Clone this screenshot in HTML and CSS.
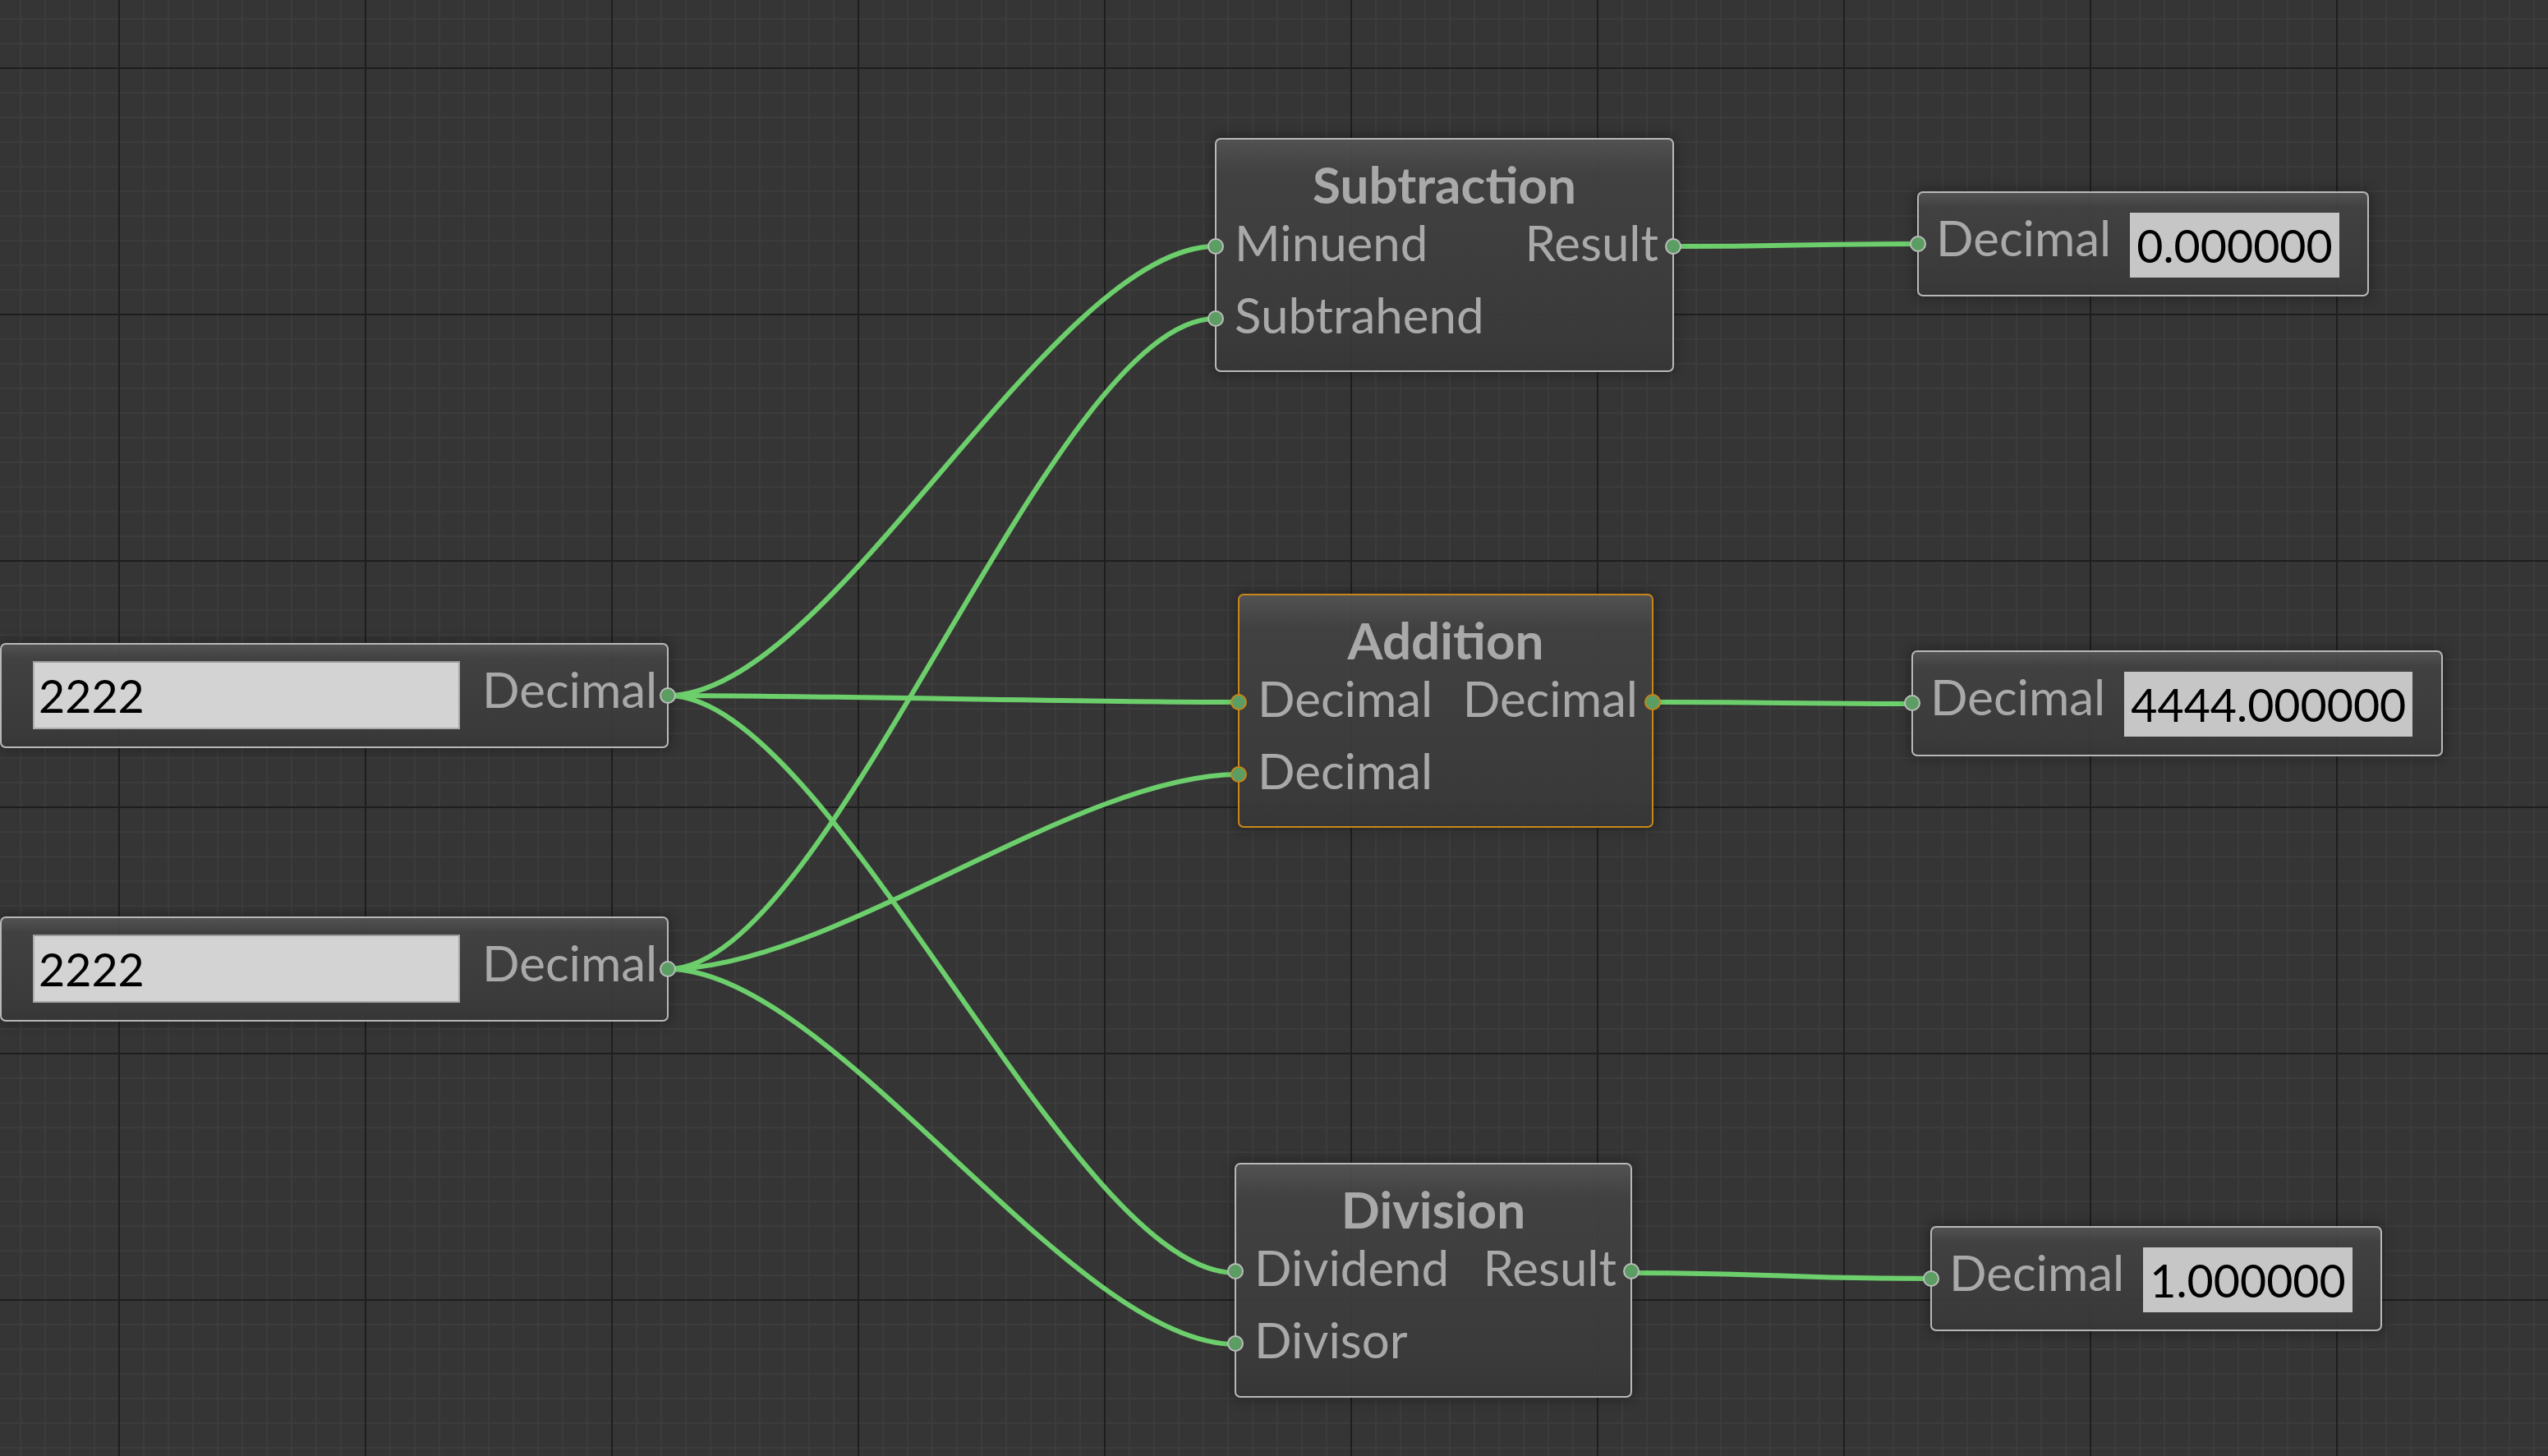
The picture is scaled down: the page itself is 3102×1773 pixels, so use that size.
FILE: index.html
```html
<!DOCTYPE html>
<html lang="en">
<head>
<meta charset="utf-8">
<title>Node Editor</title>
<link rel="stylesheet" href="styles.css">
</head>
<body>
<div class="canvas">
  <svg class="wires" width="3102" height="1773" viewBox="0 0 3102 1773" xmlns="http://www.w3.org/2000/svg">
    <g fill="none" stroke="#6ccf6c" stroke-width="6" stroke-linecap="round">
      <path d="M813,847 C1013,847 1280,300 1480,300"/>
      <path d="M813,1180 C1013,1180 1280,388 1480,388"/>
      <path d="M813,847 C1013,847 1308,855 1508,855"/>
      <path d="M813,1180 C1013,1180 1308,943 1508,943"/>
      <path d="M813,847 C1013,847 1304,1550 1504,1550"/>
      <path d="M813,1180 C1013,1180 1304,1637 1504,1637"/>
      <path d="M2037,300 C2186,300 2186,297 2335,297"/>
      <path d="M2012,855 C2170,855 2170,857 2328,857"/>
      <path d="M1986,1550 C2168,1550 2169,1557 2351,1557"/>
    </g>
  </svg>

  <div class="node value-node input-node n-in1">
    <div class="field">2222</div>
    <span class="lbl">Decimal</span>
    <span class="port port-right"></span>
  </div>

  <div class="node value-node input-node n-in2">
    <div class="field">2222</div>
    <span class="lbl">Decimal</span>
    <span class="port port-right"></span>
  </div>

  <div class="node op-node n-sub">
    <div class="title">Subtraction</div>
    <div class="row">
      <span class="port port-left"></span>
      <span class="lbl">Minuend</span>
      <span class="lbl">Result</span>
      <span class="port port-right"></span>
    </div>
    <div class="row">
      <span class="port port-left"></span>
      <span class="lbl">Subtrahend</span>
    </div>
  </div>

  <div class="node op-node selected n-add">
    <div class="title">Addition</div>
    <div class="row">
      <span class="port port-left"></span>
      <span class="lbl">Decimal</span>
      <span class="lbl">Decimal</span>
      <span class="port port-right"></span>
    </div>
    <div class="row">
      <span class="port port-left"></span>
      <span class="lbl">Decimal</span>
    </div>
  </div>

  <div class="node op-node n-div">
    <div class="title">Division</div>
    <div class="row">
      <span class="port port-left"></span>
      <span class="lbl">Dividend</span>
      <span class="lbl">Result</span>
      <span class="port port-right"></span>
    </div>
    <div class="row">
      <span class="port port-left"></span>
      <span class="lbl">Divisor</span>
    </div>
  </div>

  <div class="node value-node output-node n-out1">
    <span class="port port-left"></span>
    <span class="lbl">Decimal</span>
    <div class="readout">0.000000</div>
  </div>

  <div class="node value-node output-node n-out2">
    <span class="port port-left"></span>
    <span class="lbl">Decimal</span>
    <div class="readout">4444.000000</div>
  </div>

  <div class="node value-node output-node n-out3">
    <span class="port port-left"></span>
    <span class="lbl">Decimal</span>
    <div class="readout">1.000000</div>
  </div>
</div>
</body>
</html>
```
FILE: styles.css
```css
html, body {
  margin: 0;
  padding: 0;
  background: #353535;
}

.canvas {
  position: relative;
  width: 3102px;
  height: 1773px;
  overflow: hidden;
  font-family: Lato, "Open Sans", sans-serif;
  background-color: #353535;
  background-image:
    linear-gradient(to right, #1e1e1e 2px, transparent 2px),
    linear-gradient(to bottom, #1e1e1e 2px, transparent 2px),
    linear-gradient(to right, #3c3c3c 2px, transparent 2px),
    linear-gradient(to bottom, #3c3c3c 2px, transparent 2px);
  background-size: 300px 300px, 300px 300px, 30px 30px, 30px 30px;
  background-position: 144px 0, 0 82px, 24px 0, 0 22px;
}

.wires {
  position: absolute;
  left: 0;
  top: 0;
}

/* ---------- nodes ---------- */
.node {
  position: absolute;
  box-sizing: border-box;
  border: 2px solid #b8b8b8;
  border-radius: 7px;
  background: linear-gradient(to bottom,
    rgba(84, 84, 84, 0.92) 0,
    rgba(66, 66, 66, 0.92) 14%,
    rgba(58, 58, 58, 0.92) 88%,
    rgba(54, 54, 54, 0.92) 100%);
  box-shadow: 0 0 14px 3px rgba(0, 0, 0, 0.28);
  color: #a9a9a9;
  font-size: 60px;
}

.node.selected {
  border-color: #c9861a;
}

.lbl {
  white-space: nowrap;
}

/* ports */
.port {
  position: absolute;
  box-sizing: border-box;
  width: 20px;
  height: 20px;
  border-radius: 50%;
  background: #5b9d62;
  border: 2px solid #bdbdbd;
  z-index: 2;
}

.selected .port {
  border-color: #c9861a;
}

.port-left { left: -11px; }
.port-right { right: -11px; }

/* operation nodes */
.op-node {
  padding-top: 27px;
}

.op-node .title {
  font-weight: 700;
  font-size: 62px;
  text-align: center;
  line-height: 55px;
  height: 55px;
}

.op-node .row {
  position: relative;
  display: flex;
  justify-content: space-between;
  padding: 0 17px 0 22px;
  line-height: 87px;
  height: 88px;
}

.op-node .port {
  top: 38px;
}

/* value nodes */
.value-node {
  display: flex;
  align-items: flex-start;
  height: 128px;
}

.value-node .port {
  top: 52px;
}

.value-node .lbl {
  line-height: 58px;
  margin-top: 25px;
}

.output-node {
  padding-left: 21px;
  gap: 23px;
}

.readout {
  margin-top: 24px;
  height: 79px;
  line-height: 79px;
  padding: 0 8px;
  font-size: 55.5px;
  background: #c6c6c6;
  color: #000;
  white-space: nowrap;
}

.input-node {
  padding-left: 38px;
  gap: 27px;
}

.field {
  box-sizing: border-box;
  margin-top: 20px;
  width: 520px;
  height: 83px;
  line-height: 79px;
  padding-left: 5px;
  font-size: 55.5px;
  background: #d3d3d3;
  border: 2px solid #aaaaaa;
  border-top-color: #9a9a9a;
  color: #000;
}

/* positions on the canvas */
.n-in1 { left: 0; top: 783px; width: 814px; }
.n-in2 { left: 0; top: 1116px; width: 814px; }

.n-sub { left: 1479px; top: 168px; width: 559px; height: 285px; }
.n-add { left: 1507px; top: 723px; width: 506px; height: 285px; }
.n-div { left: 1503px; top: 1416px; width: 484px; height: 286px; }

.n-out1 { left: 2334px; top: 233px; width: 550px; }
.n-out2 { left: 2327px; top: 792px; width: 647px; height: 129px; }
.n-out3 { left: 2350px; top: 1493px; width: 550px; }
```
